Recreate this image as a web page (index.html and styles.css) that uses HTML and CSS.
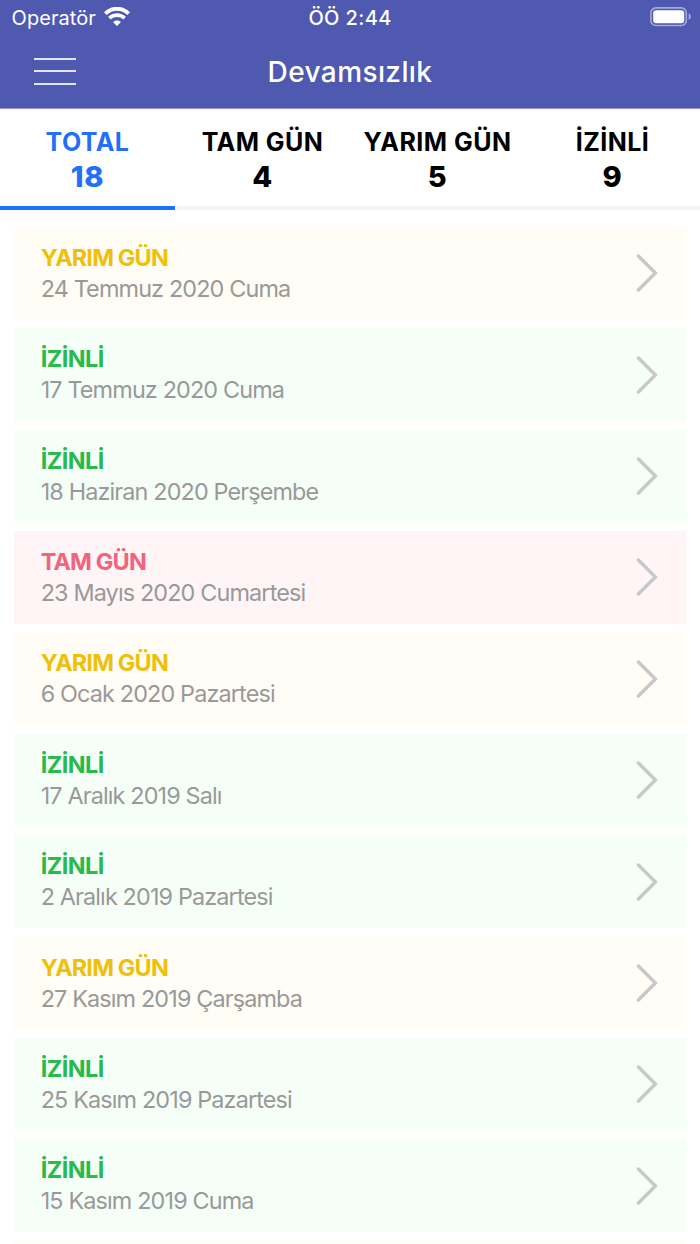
FILE: index.html
```html
<!DOCTYPE html>
<html lang="tr">

<head>
    <meta charset="UTF-8">
    <title>Devamsızlık</title>
    <link rel="stylesheet" href="styles.css">
</head>

<body>

    <header class="header">
        <div class="status-bar">
            <div class="carrier">
                <span class="carrier-name">Operatör</span>
                <svg class="wifi" width="26" height="19" viewBox="0 0 26 19">
                    <path d="M1.3 6.6 C7.8 0.2 18.2 0.2 24.7 6.6" fill="none" stroke="#fff" stroke-width="3.9"/>
                    <path d="M5.4 11.2 C9.6 7.2 16.4 7.2 20.6 11.2" fill="none" stroke="#fff" stroke-width="3.7"/>
                    <path d="M13 19 L9 15 C11.2 12.9 14.8 12.9 17 15 Z" fill="#fff"/>
                </svg>
            </div>
            <span class="clock">ÖÖ 2:44</span>
            <svg class="battery" width="42" height="20" viewBox="0 0 42 20">
                <rect x="0.9" y="0.9" width="35.4" height="17.6" rx="5" fill="none" stroke="#a5a9d8" stroke-width="1.6"/>
                <rect x="3.2" y="3.2" width="31" height="13" rx="3" fill="#fff"/>
                <path d="M38.6 6.6 C41.6 7.4 41.6 12 38.6 12.8 Z" fill="#a5a9d8"/>
            </svg>
        </div>
        <div class="nav-bar">
            <div class="menu">
                <span></span>
                <span></span>
                <span></span>
            </div>
            <h1>Devamsızlık</h1>
        </div>
    </header>

    <nav class="tabs">
        <div class="tab active"><span class="label">TOTAL</span><span class="count">18</span></div>
        <div class="tab"><span class="label">TAM GÜN</span><span class="count">4</span></div>
        <div class="tab"><span class="label">YARIM GÜN</span><span class="count">5</span></div>
        <div class="tab"><span class="label">İZİNLİ</span><span class="count">9</span></div>
    </nav>

    <main class="list" id="list"></main>

    <script>
        const tipler = {
            yarim: 'YARIM GÜN',
            izinli: 'İZİNLİ',
            tam: 'TAM GÜN'
        };

        const kayitlar = [
            ['yarim', '24 Temmuz 2020 Cuma'],
            ['izinli', '17 Temmuz 2020 Cuma'],
            ['izinli', '18 Haziran 2020 Perşembe'],
            ['tam', '23 Mayıs 2020 Cumartesi'],
            ['yarim', '6 Ocak 2020 Pazartesi'],
            ['izinli', '17 Aralık 2019 Salı'],
            ['izinli', '2 Aralık 2019 Pazartesi'],
            ['yarim', '27 Kasım 2019 Çarşamba'],
            ['izinli', '25 Kasım 2019 Pazartesi'],
            ['izinli', '15 Kasım 2019 Cuma']
        ];

        const satirlar = kayitlar.map(([tip, tarih]) => `
            <div class="row ${tip}">
                <div class="text">
                    <div class="type">${tipler[tip]}</div>
                    <div class="date">${tarih}</div>
                </div>
                <svg class="chevron" width="24" height="40" viewBox="0 0 24 40">
                    <path d="M3.4 3 L20.4 20 L3.4 37" fill="none" stroke="#c8c8c8" stroke-width="3.4" stroke-linecap="round"/>
                </svg>
            </div>`);

        // the next row only peeks in at the bottom
        satirlar.push('<div class="row peek yarim"></div>');
        document.getElementById('list').innerHTML = satirlar.join('');
    </script>
</body>

</html>
```
FILE: styles.css
```css
* {
    box-sizing: border-box;
}

body {
    font-family: Inter, "Liberation Sans", sans-serif;
    background-color: #fff;
    margin: 0;
    height: 1244px;
    overflow: hidden;
}

.header {
    height: 108.5px;
    background-color: #4f59af;
    border-bottom: 1px solid #9297c6;
    color: #fff;
}

.status-bar {
    display: grid;
    grid-template-columns: 1fr auto 1fr;
    align-items: center;
    height: 36px;
    padding: 0 8.4px 0 11.6px;
    font-size: 20px;
}

.carrier {
    display: flex;
    align-items: center;
    gap: 8px;
}

.carrier-name {
    letter-spacing: 0.05px;
}

.wifi {
    margin-top: -3px;
}

.clock {
    margin-right: 3px;
    font-weight: 500;
    letter-spacing: 0.4px;
}

.battery {
    justify-self: end;
    margin-top: -2px;
}

.nav-bar {
    display: grid;
    grid-template-columns: 1fr auto 1fr;
    align-items: center;
    height: 70px;
    padding: 0 34px;
}

.menu {
    display: flex;
    flex-direction: column;
    gap: 10.5px;
}

.menu span {
    width: 42px;
    height: 2px;
    background-color: #e4e5f3;
}

h1 {
    margin: 1px 0 0;
    font-size: 28px;
    font-weight: 500;
    letter-spacing: 0.4px;
}

.tabs {
    display: grid;
    grid-template-columns: repeat(4, 1fr);
    height: 101.5px;
}

.tab {
    display: flex;
    flex-direction: column;
    align-items: center;
    padding-top: 17px;
    border-bottom: 4px solid #f4f5f8;
    color: #000;
}

.tab.active {
    color: #236ff5;
    border-bottom-color: #236ff5;
}

.label {
    font-size: 25px;
    font-weight: 700;
    line-height: 32px;
    letter-spacing: 0.45px;
    white-space: nowrap;
}

.count {
    font-size: 29px;
    font-weight: 800;
    line-height: 37px;
    letter-spacing: 0.6px;
}

.list {
    display: flex;
    flex-direction: column;
    gap: 8.4px;
    height: 1034px;
    padding: 16.8px 13.7px 0;
    overflow: hidden;
}

.row {
    display: flex;
    flex-shrink: 0;
    justify-content: space-between;
    align-items: center;
    height: 93px;
    padding: 0 27px;
}

.row.peek {
    flex: 1 1 0;
    height: auto;
}

.type {
    font-size: 23.4px;
    font-weight: 700;
    line-height: 30px;
    letter-spacing: -0.8px;
}

.izinli .type {
    letter-spacing: -0.55px;
}

.date {
    font-size: 23.4px;
    line-height: 31px;
    letter-spacing: -0.86px;
    color: #999;
}

.yarim {
    background-color: #fffdf5;
}

.yarim .type {
    color: #efc00a;
}

.izinli {
    background-color: #f5fff8;
}

.izinli .type {
    color: #28ba4c;
}

.tam {
    background-color: #fff5f7;
}

.tam .type {
    color: #f0657d;
}
```
